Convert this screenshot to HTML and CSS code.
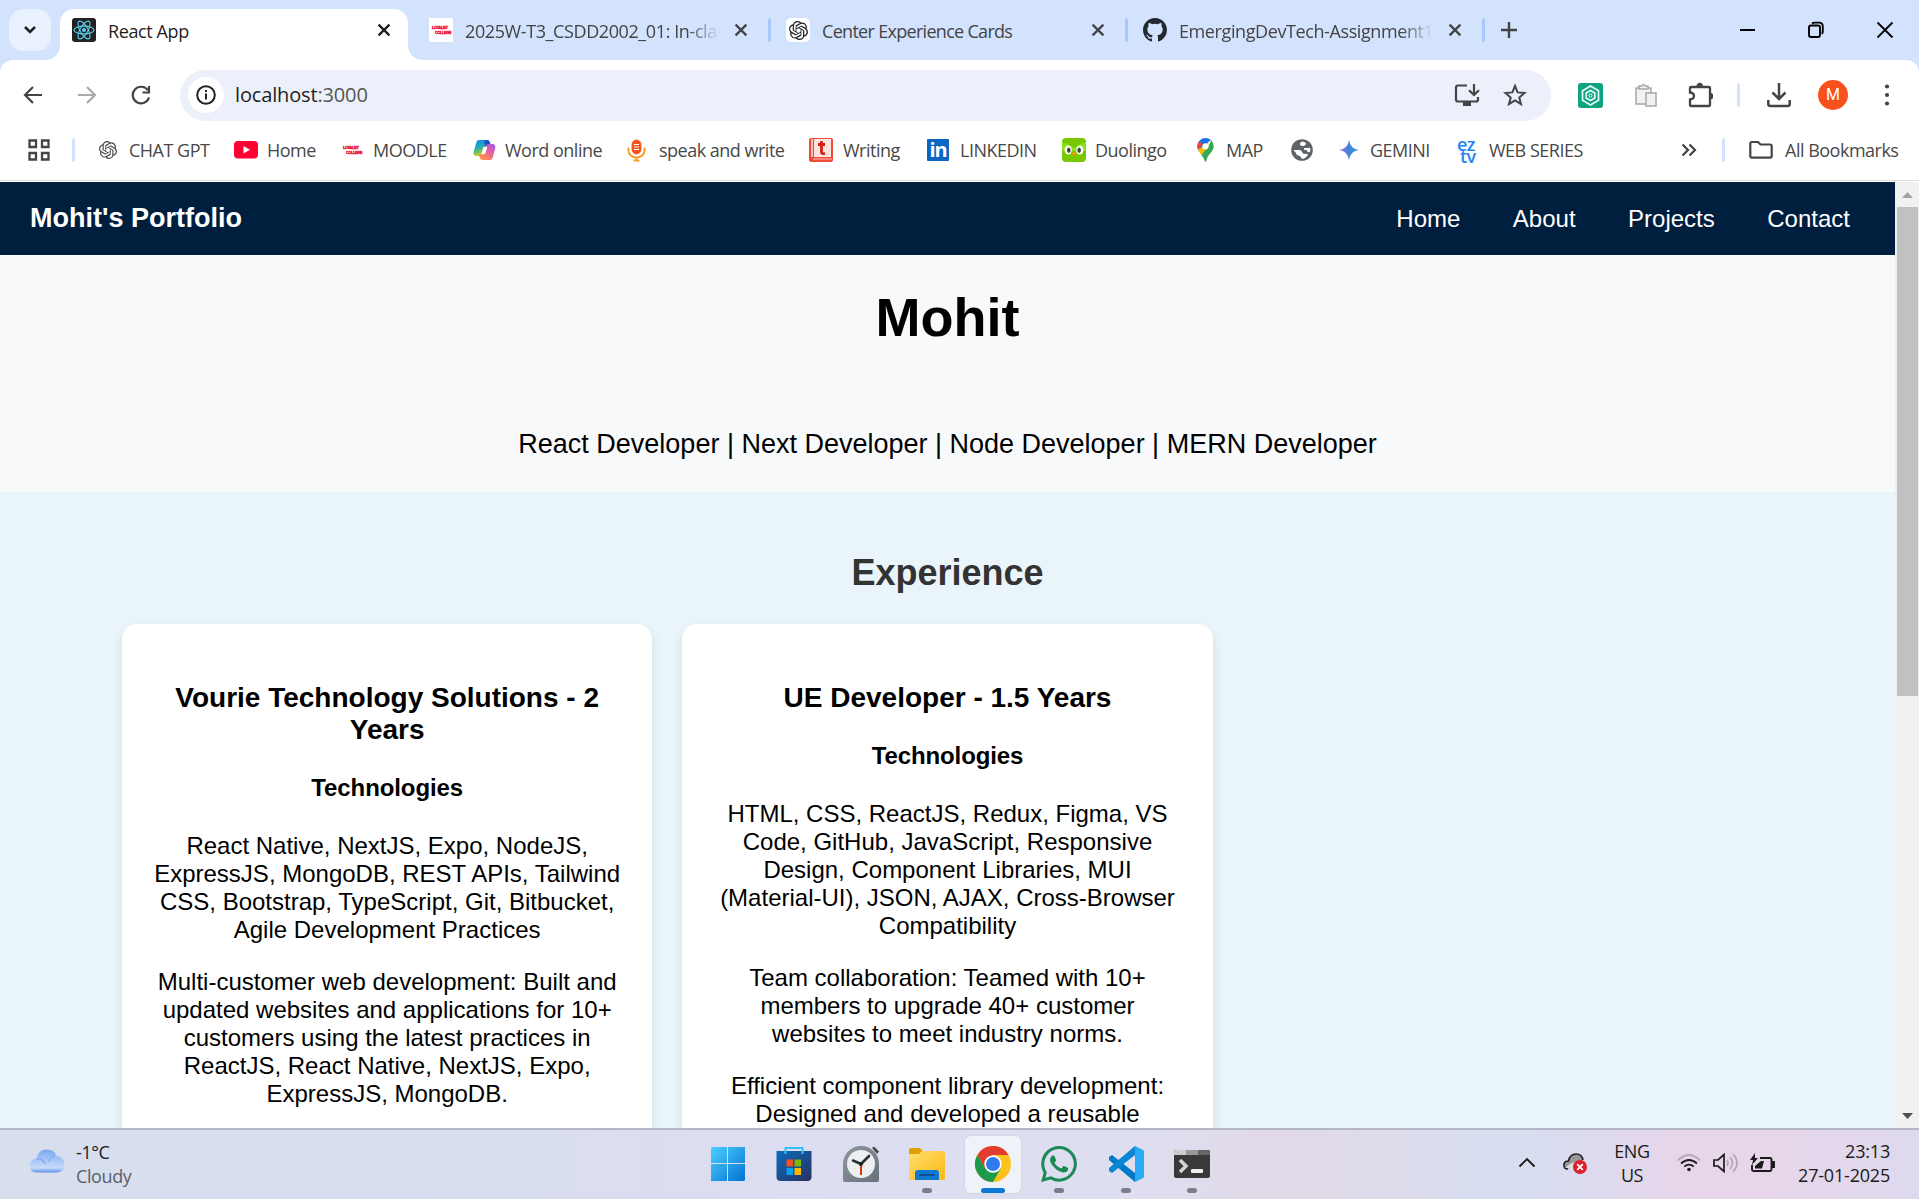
FILE: index.html
```html
<!DOCTYPE html>
<html lang="en">
<head>
<meta charset="utf-8">
<title>React App</title>
<link rel="stylesheet" href="styles.css">
</head>
<body>
<svg class="defs" width="0" height="0">
  <defs>
    <symbol id="close" viewBox="0 0 14 14"><path d="M1.6 1.6 12.4 12.4M12.4 1.6 1.6 12.4" fill="none" stroke="currentColor" stroke-width="2.3"/></symbol>
    <symbol id="openai" viewBox="0 0 24 24"><path fill="currentColor" d="M22.28 9.82a5.98 5.98 0 0 0-.52-4.91 6.05 6.05 0 0 0-6.51-2.9A6.07 6.07 0 0 0 4.98 4.18a5.98 5.98 0 0 0-4 2.9 6.05 6.05 0 0 0 .75 7.1 5.98 5.98 0 0 0 .51 4.9 6.05 6.05 0 0 0 6.51 2.9A5.98 5.98 0 0 0 13.26 24a6.06 6.06 0 0 0 5.77-4.2 5.99 5.99 0 0 0 4-2.9 6.06 6.06 0 0 0-.75-7.08zm-9.02 12.6a4.48 4.48 0 0 1-2.88-1.03l.14-.08 4.78-2.76a.8.8 0 0 0 .39-.68v-6.74l2.02 1.17a.07.07 0 0 1 .04.05v5.58a4.5 4.5 0 0 1-4.49 4.5zM3.6 18.3a4.47 4.47 0 0 1-.53-3.01l.14.08 4.78 2.76a.77.77 0 0 0 .78 0l5.84-3.37v2.33a.08.08 0 0 1-.03.06L9.74 19.95A4.5 4.5 0 0 1 3.6 18.3zM2.34 7.9a4.49 4.49 0 0 1 2.37-1.98V11.6a.77.77 0 0 0 .39.68l5.81 3.35-2.02 1.17a.08.08 0 0 1-.07 0L3.99 14A4.5 4.5 0 0 1 2.34 7.87zm16.6 3.85L13.1 8.36 15.12 7.2a.08.08 0 0 1 .07 0l4.83 2.79a4.49 4.49 0 0 1-.68 8.1v-5.68a.79.79 0 0 0-.4-.66zm2.01-3.02-.14-.09-4.77-2.78a.78.78 0 0 0-.79 0L9.41 9.23V6.9a.07.07 0 0 1 .03-.06l4.83-2.79a4.5 4.5 0 0 1 6.68 4.66zM8.31 12.86l-2.02-1.16a.08.08 0 0 1-.04-.06V6.07a4.5 4.5 0 0 1 7.38-3.45l-.14.08L8.7 5.46a.8.8 0 0 0-.39.68zm1.1-2.36 2.6-1.5 2.6 1.5v3l-2.6 1.5-2.6-1.5z"/></symbol>
    <linearGradient id="copilotA" x1="0" y1="0" x2=".4" y2="1"><stop offset="0" stop-color="#168bdf"/><stop offset=".45" stop-color="#1ba6c6"/><stop offset=".75" stop-color="#7cc255"/><stop offset="1" stop-color="#f5c51b"/></linearGradient>
    <linearGradient id="copilotB" x1="1" y1="0" x2=".4" y2="1"><stop offset="0" stop-color="#9b5cf0"/><stop offset=".5" stop-color="#e5609d"/><stop offset="1" stop-color="#ff8d55"/></linearGradient>
    <linearGradient id="gem" x1="0" x2="1"><stop offset="0" stop-color="#9577d8"/><stop offset=".5" stop-color="#4285d8"/><stop offset="1" stop-color="#2aa3e8"/></linearGradient>
    <linearGradient id="win" gradientUnits="userSpaceOnUse" x1="0" y1="0" x2="36" y2="36"><stop offset="0" stop-color="#4fd2ff"/><stop offset="1" stop-color="#0070d2"/></linearGradient>
    <linearGradient id="bag" x1="0" y1="0" x2="1" y2="1"><stop offset="0" stop-color="#0a6cc0"/><stop offset="1" stop-color="#28305e"/></linearGradient>
    <linearGradient id="clockBody" x1="0" y1="0" x2="1" y2="1"><stop offset="0" stop-color="#8e979f"/><stop offset="1" stop-color="#67727b"/></linearGradient>
    <linearGradient id="folder" x1="0" y1="0" x2="1" y2="1"><stop offset="0" stop-color="#ffdf70"/><stop offset="1" stop-color="#fcb813"/></linearGradient>
    <linearGradient id="cloud" x1="0" y1="0" x2="0" y2="1"><stop offset="0" stop-color="#7ba8f0"/><stop offset=".8" stop-color="#c6dbfb"/><stop offset="1" stop-color="#5f90e8"/></linearGradient>
  </defs>
</svg>

<div class="screen">
  <header class="tabstrip">
    <button class="tab-search"><svg width="14" height="10" viewBox="0 0 14 10"><path d="m2 2 5 5 5-5" fill="none" stroke="#1f1f1f" stroke-width="2.5"/></svg></button>
    <div class="tab tab-active">
      <svg class="favicon" viewBox="0 0 24 24"><rect width="24" height="24" rx="3" fill="#222"/><g fill="none" stroke="#5ccfee" stroke-width="1.1"><ellipse cx="12" cy="12" rx="10" ry="3.9"/><ellipse cx="12" cy="12" rx="10" ry="3.9" transform="rotate(60 12 12)"/><ellipse cx="12" cy="12" rx="10" ry="3.9" transform="rotate(120 12 12)"/></g><circle cx="12" cy="12" r="2" fill="#5ccfee"/></svg>
      <span class="tab-title">React App</span>
      <svg class="tab-close"><use href="#close"/></svg>
    </div>
    <div class="tab">
      <span class="favicon loyalist loyalist-tab"><b>LOYALIST</b><b>COLLEGE</b></span>
      <span class="tab-title fade">2025W-T3_CSDD2002_01: In-class</span>
      <svg class="tab-close"><use href="#close"/></svg><i class="sep"></i>
    </div>
    <div class="tab">
      <span class="favicon gpt-tile"><svg width="19" height="19"><use href="#openai"/></svg></span>
      <span class="tab-title tight">Center Experience Cards</span>
      <svg class="tab-close"><use href="#close"/></svg><i class="sep"></i>
    </div>
    <div class="tab">
      <svg class="favicon" viewBox="0 0 16 16"><path fill="#24292f" d="M8 0C3.58 0 0 3.58 0 8c0 3.54 2.29 6.53 5.47 7.59.4.07.55-.17.55-.38 0-.19-.01-.82-.01-1.49-2.01.37-2.53-.49-2.69-.94-.09-.23-.48-.94-.82-1.13-.28-.15-.68-.52-.01-.53.63-.01 1.08.58 1.23.82.72 1.21 1.87.87 2.33.66.07-.52.28-.87.51-1.07-1.78-.2-3.64-.89-3.64-3.95 0-.87.31-1.59.82-2.15-.08-.2-.36-1.02.08-2.12 0 0 .67-.21 2.2.82a7.6 7.6 0 0 1 4 0c1.53-1.04 2.2-.82 2.2-.82.44 1.1.16 1.92.08 2.12.51.56.82 1.27.82 2.15 0 3.07-1.87 3.75-3.65 3.95.29.25.54.73.54 1.48 0 1.07-.01 1.93-.01 2.2 0 .21.15.46.55.38A8.01 8.01 0 0 0 16 8c0-4.42-3.58-8-8-8z"/></svg>
      <span class="tab-title fade">EmergingDevTech-Assignment1</span>
      <svg class="tab-close"><use href="#close"/></svg><i class="sep"></i>
    </div>
    <button class="new-tab"><svg width="18" height="18"><path d="M9 1v16M1 9h16" stroke="#444" stroke-width="2.4"/></svg></button>
    <div class="window-buttons">
      <svg width="18" height="18"><path d="M2 9h15" stroke="#000" stroke-width="2"/></svg>
      <svg width="18" height="18" fill="none" stroke="#000" stroke-width="1.9"><rect x="2" y="4.500" width="11" height="11.500" rx="2"/><path d="M5 2.500Q6 1.600 8 1.600h4Q15.800 1.600 15.800 5.500v4Q15.800 12 15 13"/></svg>
      <svg width="18" height="18"><path d="m1.500 1.500 15 15m0-15-15 15" stroke="#000" stroke-width="1.800"/></svg>
    </div>
  </header>

  <div class="toolbar">
    <svg width="20" height="20" class="nav-icon" stroke="#444"><path d="M19 10H2m8-8-8 8 8 8"/></svg>
    <svg width="20" height="20" class="nav-icon" stroke="#aaa"><path d="M1 10h17m-8-8 8 8-8 8"/></svg>
    <svg width="20" height="20" class="nav-icon" stroke="#444"><path d="M18 12.500A8.300 8.300 0 1 1 16.800 5.200M18 1v6.500h-6.500"/></svg>
    <div class="omnibox">
      <span class="site-info"><svg width="20" height="20"><circle cx="10" cy="10" r="8.800" fill="none" stroke="#222" stroke-width="2"/><path d="M10 8.500v6M10 5v2" stroke="#222" stroke-width="2"/></svg></span>
      <span class="url">localhost<em>:3000</em></span>
      <svg class="install" width="26" height="24" fill="none" stroke="#444" stroke-width="2.200"><path d="M13 2.500H4Q2 2.500 2 4.500v12Q2 18.500 4 18.500h18q2 0 2-2V14"/><path d="M9 21h8" stroke-width="4"/><path d="M20 1v11m-5-4.800 5 4.800 5-4.800"/></svg>
      <svg width="24" height="24" fill="none" stroke="#444" stroke-width="2"><path d="m12 3 2.600 6.400 7 .6-5.300 4.500 1.700 6.700-6-3.700-6 3.700 1.700-6.700L2.400 10l7-.6z"/></svg>
    </div>
    <svg width="25" height="25"><rect width="25" height="25" rx="3" fill="#10a37f"/><g fill="none" stroke="#e6fff6" stroke-width="1.700"><path d="m12.500 3 8 4.700v9.600l-8 4.700-8-4.700V7.700z"/><path d="m12.500 7.500 4.300 2.400v5.200l-4.300 2.400-4.300-2.400V9.900z"/><path d="m12.500 10.800 1.500.8v1.800l-1.500.8-1.500-.8v-1.800z" stroke-width="1"/></g></svg>
    <svg width="24" height="25" fill="#f2f2f2" stroke="#a8a8a8" stroke-width="1.500"><path d="M2 5h15v16H2z"/><path d="M5 6V3h3q1.500-3 3 0h3v3z"/><path d="M12 10h10v13H12z"/></svg>
    <svg width="26" height="26" fill="none" stroke="#444" stroke-width="2.300"><path d="M5 5h17q1 0 1 1v17q0 1-1 1H4q-1 0-1-1v-5.500q4-.5 4-3.500T3 10.500V6q0-1 1-1z"/><path d="M10.500 4.500Q11 2 12.800 2T15 4.500M23 12q2.500.5 2.500 2.300T23 16.500" fill="#444"/></svg>
    <i class="sep light"></i>
    <svg width="26" height="26" fill="none" stroke="#444" stroke-width="2.500"><path d="M13 1v16m-6.500-6.500L13 17l6.500-6.500M2.300 18v4q0 2 2 2h17.400q2 0 2-2v-4"/></svg>
    <span class="avatar">M</span>
    <svg width="6" height="24" fill="#444"><circle cx="3" cy="3.500" r="2.100"/><circle cx="3" cy="12" r="2.100"/><circle cx="3" cy="20.500" r="2.100"/></svg>
  </div>

  <nav class="bookmarks">
    <svg width="22" height="22" fill="none" stroke="#444" stroke-width="2.300"><path d="M1.500 1.500h6.500V8H1.500zM14 1.500h6.500V8H14zM1.500 14h6.500v6.500H1.500zM14 14h6.500v6.500H14z"/></svg>
    <i class="sep light"></i>
    <svg width="18" height="18"><use href="#openai"/></svg><span>CHAT GPT</span>
    <svg width="24" height="18"><rect width="24" height="17.500" rx="4" fill="#ff0033"/><path d="m9.500 5 6.500 3.700-6.500 3.700z" fill="#fff"/></svg><span>Home</span>
    <span class="loyalist"><b>LOYALIST</b><b>COLLEGE</b></span><span>MOODLE</span>
    <svg width="23" height="22"><path d="M6 1h8q2 0 2.700 2l1 3h-3q-2 0-2.600 2L9.500 15q-.6 2-2.500 2H3.500Q0 17 .8 12.500L3.400 3Q4 1 6 1z" fill="url(#copilotA)"/><path d="M11 1h3q2 0 2.700 2l1 3h-3q-2 0-2.600 1.500z" fill="#1b4fd0"/><path d="M17 21H9.500q-2 0-2.700-2L6 16h2q2 0 2.600-2L13 7q.6-2 2.500-2h4q3.500 0 2.700 4.500L19.600 19q-.6 2-2.600 2z" fill="url(#copilotB)"/><path d="m10.500 8-2.200 7h3.800l2.200-7z" fill="#fff"/></svg><span>Word online</span>
    <svg width="20" height="24" fill="none" stroke="#f06a24"><rect x="5" y="2" width="9" height="14" rx="4.500" fill="#f4511e"/><path d="M1.500 9.500v3a8 7 0 0 0 16 0v-3M9.500 19v4M6.500 22.500h6" stroke="#fb9c2d" stroke-width="2"/><path d="M7 6.500h5M7 9h5M7 11.500h5" stroke="#fff"/></svg><span>speak and write</span>
    <svg width="24" height="24"><path d="M4 0h18q2 0 2 2v20q0 2-2 2H2q-2 0-2-2V2q0-2 2-2z" fill="#f04b35"/><path d="M5 1h17v18H5z" fill="#fbe4df"/><path d="M2 1h2v18H2zM4 20.500h19v1H4z" fill="#fbb"/><path d="M12.500 3v11q0 2.200 3.500 1.500M9 6.500h7" fill="none" stroke="#d81f16" stroke-width="2.800"/></svg><span>Writing</span>
    <span class="linkedin">in</span><span>LINKEDIN</span>
    <svg width="24" height="24"><rect width="24" height="24" rx="4" fill="#78c800"/><path d="M0 4q6 2 12 6 6-4 12-6v9H0z" fill="#89e219"/><ellipse cx="6.200" cy="12" rx="3.600" ry="4.600" fill="#fff"/><ellipse cx="17.800" cy="12" rx="3.600" ry="4.600" fill="#fff"/><ellipse cx="6.800" cy="12.300" rx="1.800" ry="2.700" fill="#444"/><ellipse cx="17.200" cy="12.300" rx="1.800" ry="2.700" fill="#444"/><path d="m9.500 15.500 2.500-1.500 2.500 1.500-2.500 3z" fill="#ff9600"/></svg><span>Duolingo</span>
    <svg width="17" height="24"><path d="M8.500 0A8.200 8.200 0 0 0 .3 8.200q0 2.800 2 5.800L5 11 12 3.500 14 2Q12 0 8.500 0z" fill="#1a73e8"/><path d="M2.300 3 6 6.500l-5 5Q.3 10 .3 8.200.3 5 2.300 3z" fill="#ea4335"/><path d="M1 11.500 11.500 5v6L4.300 17Q2 14 1 11.500z" fill="#fbbc04"/><path d="M14.200 2.200Q16.700 5 16.700 8.200c0 5.300-6 7.800-7.200 14.300-.3 1.500-1.700 1.500-2 0-.5-2-1.700-3.700-3.200-5.500L11.500 8.500z" fill="#34a853"/><circle cx="8.500" cy="8.300" r="3.100" fill="#fff"/></svg><span>MAP</span>
    <svg width="22" height="22"><circle cx="11" cy="11" r="10.800" fill="#5f6368"/><path d="M12 2.500q-3 .5-3 2.500t3 2q3-.5 3-3M2.500 11h6q2 0 2.500 2t3 2q2-.5 3 .5-2 4-6 4.500-1-3-3.500-3.500T5 14zM13 9h4q2-1 2.500 1l-.5 3q-2 1-3-1t-3-1z" fill="#fff"/></svg>
    <svg width="20" height="20"><path d="M10 0q1.200 8.800 10 10-8.800 1.200-10 10Q8.800 11.200 0 10 8.800 8.800 10 0z" fill="url(#gem)"/></svg><span>GEMINI</span>
    <span class="eztv"><b>ez</b><b>tv</b></span><span>WEB SERIES</span>
    <svg width="16" height="14" fill="none" stroke="#444" stroke-width="2.200"><path d="m1.500 1.500 5.500 5.500-5.500 5.500M8.500 1.500 14 7l-5.500 5.500"/></svg>
    <i class="sep light"></i>
    <svg width="24" height="20" fill="none" stroke="#444" stroke-width="2.200"><path d="M3 2h6l2.500 2.500H21q1.700 0 1.700 1.700V16q0 1.700-1.700 1.700H3Q1.300 17.700 1.300 16V3.700Q1.300 2 3 2z"/></svg><span>All Bookmarks</span>
  </nav>

  <div class="viewport">
    <main class="page">
      <div class="site-nav">
        <strong>Mohit's Portfolio</strong>
        <ul><li>Home</li><li>About</li><li>Projects</li><li>Contact</li></ul>
      </div>
      <section class="hero">
        <h1>Mohit</h1>
        <p>React Developer | Next Developer | Node Developer | MERN Developer</p>
      </section>
      <section class="experience">
        <h2>Experience</h2>
        <div class="cards">
          <article class="card">
            <h3>Vourie Technology Solutions - 2 Years</h3>
            <h4>Technologies</h4>
            <p>React Native, NextJS, Expo, NodeJS, ExpressJS, MongoDB, REST APIs, Tailwind CSS, Bootstrap, TypeScript, Git, Bitbucket, Agile Development Practices</p>
            <p>Multi-customer web development: Built and updated websites and applications for 10+ customers using the latest practices in ReactJS, React Native, NextJS, Expo, ExpressJS, MongoDB.</p>
          </article>
          <article class="card">
            <h3>UE Developer - 1.5 Years</h3>
            <h4>Technologies</h4>
            <p>HTML, CSS, ReactJS, Redux, Figma, VS Code, GitHub, JavaScript, Responsive Design, Component Libraries, MUI (Material-UI), JSON, AJAX, Cross-Browser Compatibility</p>
            <p>Team collaboration: Teamed with 10+ members to upgrade 40+ customer websites to meet industry norms.</p>
            <p>Efficient component library development: Designed and developed a reusable</p>
          </article>
        </div>
      </section>
    </main>
    <div class="scrollbar">
      <svg width="24" height="25"><path d="m7 16 5.500-6L18 16z" fill="#a3a3a3"/></svg>
      <div class="thumb"></div>
      <svg class="down" width="24" height="25"><path d="m7 10 5.500 6L18 10z" fill="#505050"/></svg>
    </div>
  </div>

  <footer class="taskbar">
    <div class="weather">
      <svg width="36" height="24"><path d="M8 23.500Q.5 23 .5 16.500T7.500 10Q9 .5 17.500.5T27.500 7Q35.500 8 35.500 15.500T28 23.500z" fill="url(#cloud)"/><path d="M7 10q7-1 9 5m10-8q-5 1-6 6" fill="none" stroke="#6f9dec" stroke-width="1.200" opacity=".7"/></svg>
      <div><span class="temp">-1°C</span><span class="sky">Cloudy</span></div>
    </div>
    <div class="apps">
      <div class="app"><svg width="36" height="36"><g fill="url(#win)"><path d="M2 1h15v16H1V2zM18 1h17v16H18zM1 18h16v17H1zM18 18h17v16l-1 1H18z"/></g></svg></div>
      <div class="app"><svg width="36" height="36"><path d="M.5 5h35v26q0 4-4 4h-27q-4 0-4-4z" fill="url(#bag)"/><path d="M9.500 8V2h17v6" fill="none" stroke="#2fc4f3" stroke-width="2"/><path d="M10.500 13.500H17v7h-6.500z" fill="#f25022"/><path d="M18.500 13.500H25v7h-6.500z" fill="#7fba00"/><path d="M10.500 22H17v7h-6.500z" fill="#00a4ef"/><path d="M18.500 22H25v7h-6.500z" fill="#ffb900"/></svg></div>
      <div class="app"><svg width="36" height="36"><path d="m29 2 2-1.500 5 5L34 8z" fill="#4a4a4a"/><path d="M0 18a18 18 0 0 1 36 0v16q0 2-2 2H2q-2 0-2-2z" fill="url(#clockBody)"/><circle cx="18" cy="18" r="14" fill="#edf0f2"/><path d="m18 18 8-8M18 18l-8-3.500" stroke="#2c3135" stroke-width="2.600" stroke-linecap="round"/><path d="M18 18v11" stroke="#d83b01" stroke-width="2"/><circle cx="18" cy="18" r="2" fill="#222"/></svg></div>
      <div class="app running"><svg width="36" height="36"><path d="M0 4q0-2 2-2h8.500L14 5v5H0z" fill="#dfa000"/><path d="M13 5h21q2 0 2 2v25q0 2-2 2H2q-2 0-2-2V8h10z" fill="url(#folder)"/><path d="M6 34v-7q0-3 3-3h18q3 0 3 3v7z" fill="#0f78d0"/><path d="M11 29h14" stroke="#0a4c96" stroke-width="1.800" stroke-linecap="round"/></svg></div>
      <div class="app running current"><svg width="36" height="36"><circle cx="18" cy="18" r="18" fill="#fcc31e"/><path d="M2.400 9A18 18 0 0 1 33.600 9H18l-7.800 13.500z" fill="#e33b2e"/><path d="M2.400 9A18 18 0 0 0 18 36l7.800-13.500H10.200z" fill="#1f9a4c"/><circle cx="18" cy="18" r="8.700" fill="#fff"/><circle cx="18" cy="18" r="7" fill="#2f7bed"/></svg></div>
      <div class="app running"><svg width="36" height="36" viewBox="0 0 24 24"><path fill="#1c8a57" d="M17.47 14.38c-.3-.15-1.76-.87-2.03-.97-.27-.1-.47-.15-.67.15-.2.3-.77.97-.94 1.16-.17.2-.35.22-.64.08-.3-.15-1.26-.46-2.39-1.48-.88-.79-1.48-1.76-1.65-2.06-.17-.3-.02-.46.13-.6.13-.14.3-.35.45-.52.15-.18.2-.3.3-.5.1-.2.05-.37-.03-.52-.07-.15-.67-1.61-.91-2.2-.24-.58-.49-.5-.67-.51h-.57c-.2 0-.52.07-.79.37-.27.3-1.04 1.02-1.04 2.48s1.07 2.88 1.21 3.07c.15.2 2.1 3.2 5.08 4.49.71.3 1.26.49 1.69.63.71.22 1.36.19 1.87.11.57-.08 1.76-.72 2.01-1.41.25-.7.25-1.29.17-1.41-.07-.13-.27-.2-.57-.35M12.050 21.780a9.870 9.870 0 0 1-5.030-1.380l-.36-.21-3.740.98 1-3.640-.24-.38a9.860 9.860 0 1 1 8.370 4.630m8.410-18.300A11.820 11.820 0 0 0 12.050 0C5.500 0 .16 5.340.16 11.890c0 2.100.55 4.140 1.590 5.950L.06 24l6.300-1.650a11.880 11.880 0 0 0 5.690 1.450c6.550 0 11.890-5.340 11.890-11.890a11.820 11.820 0 0 0-3.480-8.410z"/></svg></div>
      <div class="app running"><svg width="36" height="36"><path d="M1 11 4 9l23 18v9L1 14z" fill="#0079c9"/><path d="M1 25 4 27 27 9V0L1 22z" fill="#0b86d3"/><path d="M27 0v36l8-4q1-.5 1-1.500v-25q0-1-1-1.500z" fill="#2aa9f5"/></svg></div>
      <div class="app running"><svg width="36" height="36"><path d="M0 6q0-2 2-2h32q2 0 2 2v24q0 2-2 2H2q-2 0-2-2z" fill="#393939"/><path d="M0 9V6q0-2 2-2h10v5z" fill="#ccc"/><path d="M12 4h12v5H12z" fill="#999"/><path d="M24 4h10q2 0 2 2v3H24z" fill="#666"/><path d="m6 14 6 6-6 6" fill="none" stroke="#d4d4d4" stroke-width="3.500"/><rect x="17" y="23" width="12" height="4" rx="1" fill="#eee"/></svg></div>
    </div>
    <div class="tray">
      <svg width="18" height="11"><path d="m1.500 9.500 7.500-7.500 7.500 7.500" fill="none" stroke="#1b1b1b" stroke-width="1.900"/></svg>
      <svg width="26" height="22"><path d="M6 17q-4 0-4-4t4.500-4Q8 2 14 2t7 6" fill="#999" stroke="#222" stroke-width="1.700"/><path d="M3 16q7-7 13-6l-5 6z" fill="#ddd"/><circle cx="18" cy="15" r="7" fill="#dc1f2e"/><path d="m15.200 12.200 5.600 5.600m0-5.600-5.600 5.600" stroke="#fff" stroke-width="1.800"/></svg>
      <div class="lang"><span>ENG</span><span>US</span></div>
      <svg width="24" height="18" fill="none" stroke="#1b1b1b" stroke-width="1.700"><path d="M.7 6.500Q12-4.500 23.300 6.500" stroke="#b5a5b5"/><path d="M4 9.500q8-7 16 0M7.300 12.700q4.700-4.200 9.400 0"/><circle cx="12" cy="15.500" r="1.800" fill="#1b1b1b" stroke="none"/></svg>
      <svg width="26" height="20" fill="none" stroke="#1b1b1b" stroke-width="1.700"><path d="M1 7h4l6-5.500v17L5 13H1z"/><path d="M14 7q2 3 0 6M17 4q5 6 0 12M20 1q8 9 0 18" stroke="#b5a5b5"/></svg>
      <svg width="25" height="20" fill="none" stroke="#1b1b1b" stroke-width="1.900"><path d="M10 5h10q1.500 0 1.500 1.500v10Q21.500 18 20 18H3.500Q2 18 2 16.500V12"/><path d="M22 9h2v5h-2z" fill="#1b1b1b"/><path d="M5 15.500V13l6-5h3l-2 7.500z" fill="#1b1b1b" stroke="none"/><path d="M5 0 0 7h3l-1 5 6-7H5z" fill="#1b1b1b" stroke="none"/></svg>
      <div class="clock"><span>23:13</span><span>27-01-2025</span></div>
    </div>
  </footer>
</div>
</body>
</html>
```
FILE: styles.css
```css
* { box-sizing: border-box; }
body { margin: 0; overflow: hidden; background: #fff; }
svg { display: block; flex: none; }
.defs { position: absolute; }
button { border: 0; padding: 0; background: none; }

.screen {
  width: 1919px;
  height: 1199px;
  display: grid;
  grid-template-rows: 60px 70px 52px 946px 71px;
  font-family: "Open Sans", "Noto Sans", sans-serif;
  font-size: 18px;
  color: #444;
}

/* Tab strip */
.tabstrip {
  display: grid;
  grid-template-columns: 42px 348px 357px 357px 357px 78px 1fr;
  padding: 9px 0 0 9px;
  background: #d3e2fd;
}
.tab-search { width: 42px; height: 42px; border-radius: 14px; background: #e9f0fe; display: grid; place-items: center; }
.tab {
  display: flex;
  align-items: center;
  height: 51px;
  margin-left: 9px;
  padding: 0 0 9px 21px;
  position: relative;
}
.tab-active { width: 348px; background: #fff; border-radius: 14px 14px 0 0; padding-left: 12px; color: #1f1f1f; }
.tab-active::before, .tab-active::after {
  content: "";
  position: absolute;
  bottom: 0;
  width: 14px;
  height: 14px;
  background: radial-gradient(circle at 0 0, transparent 13.5px, #fff 14px);
}
.tab-active::before { left: -14px; }
.tab-active::after { right: -14px; background: radial-gradient(circle at 100% 0, transparent 13.5px, #fff 14px); }
.favicon { width: 24px; height: 24px; flex: none; }
.tab-title { flex: none; width: 252px; margin: 1px 0 0 12px; white-space: nowrap; line-height: 28px; letter-spacing: -.4px; }
.tight { letter-spacing: -.7px; }
.fade { overflow: hidden; -webkit-mask-image: linear-gradient(90deg, #000 222px, transparent 254px); mask-image: linear-gradient(90deg, #000 222px, transparent 254px); }
.tab-close { width: 14px; height: 14px; margin-left: 17px; }
.sep { display: block; flex: none; width: 3px; height: 24px; border-radius: 2px; background: #a8c7fa; }
.tab .sep { margin-left: 20px; }
.sep.light { background: #d3e3fd; }
.gpt-tile { background: #fff; border-radius: 5px; display: grid; place-items: center; color: #222; }
.loyalist { display: flex; flex-direction: column; justify-content: center; font: 900 4px/5px "Liberation Sans", sans-serif; color: #f0143c; letter-spacing: -.5px; -webkit-text-stroke: .4px #f0143c; }
.loyalist b:last-child { padding-left: 3px; }
.loyalist-tab { background: #fff; padding-left: 3px; }
.new-tab { height: 42px; display: grid; place-items: center; }
.window-buttons { display: flex; justify-content: flex-end; align-items: center; gap: 51px; height: 42px; padding-right: 25px; }

/* Toolbar */
.toolbar {
  display: grid;
  grid-template-columns: 54px 54px 49px 1398px 56px 53px 50px 29px 52px 66px 1fr;
  align-items: center;
  padding-left: 23px;
  background: #fff;
  position: relative;
}
.toolbar::before, .toolbar::after { content: ""; position: absolute; top: 0; width: 12px; height: 12px; background: radial-gradient(circle at 100% 100%, transparent 11.5px, #d3e2fd 12px); left: 0; }
.toolbar::after { left: auto; right: 0; background: radial-gradient(circle at 0 100%, transparent 11.5px, #d3e2fd 12px); }
.nav-icon { fill: none; stroke-width: 2.2; }
.omnibox { width: 1371px; height: 51px; border-radius: 26px; background: #ecf0fa; display: flex; align-items: center; padding-left: 8px; }
.site-info { width: 36px; height: 36px; border-radius: 50%; background: #fff; display: grid; place-items: center; }
.url { flex: 1; margin-left: 11px; font-size: 20px; line-height: 28px; color: #1f1f1f; letter-spacing: -.15px; }
.url em { font-style: normal; color: #555; }
.install { margin-right: 23px; }
.omnibox > svg:last-child { margin-right: 24px; }
.avatar { width: 30px; height: 30px; border-radius: 50%; background: #f9511d; color: #fff; text-align: center; font: 16px/30px Roboto, sans-serif; }

/* Bookmarks bar: alternating icon and label columns */
.bookmarks {
  display: grid;
  grid-template-columns: 44px 27px 30px 105px 33px 76px 30px 100px 32px 122px 32px 150px 34px 84px 33px 102px 33px 102px 29px 65px 48px 31px 87px 32px 192px 41px 27px 36px 1fr;
  align-items: center;
  padding: 0 0 10px 28px;
  height: 51px;
  border-bottom: 1px solid #dcdee2;
  color: #484848;
  white-space: nowrap;
}
.bookmarks > span { line-height: 26px; letter-spacing: -.5px; }
.bookmarks > .linkedin { width: 22px; height: 22px; background: #0a66c2; color: #fff; border-radius: 1px; font: 700 20px/21px "Open Sans", sans-serif; text-align: center; letter-spacing: -1px; }
.bookmarks > .loyalist { line-height: 5px; letter-spacing: -.5px; }
.bookmarks > .eztv { display: flex; flex-direction: column; color: #2783f5; line-height: 12px; }
.eztv b { font-size: 18px; font-weight: 600; line-height: 12px; height: 12px; }
.eztv b:last-child { padding-left: 3px; }

/* Portfolio page */
.viewport { display: grid; grid-template-columns: 1895px 24px; min-height: 0; }
.page { height: 946px; overflow: hidden; font-family: "Liberation Sans", Arial, sans-serif; font-size: 24px; line-height: 28px; color: #000; background: #eaf5fa; }
.site-nav { height: 73px; padding: 0 45px 2px 30px; background: #001f3f; color: #fff; display: flex; justify-content: space-between; align-items: center; }
.site-nav strong { font-size: 27px; }
.site-nav ul { display: flex; gap: 52.5px; list-style: none; margin: 2px 0 0; padding: 0; }
.hero { height: 237px; padding-top: 31px; background: #f8f9fb; text-align: center; }
.hero h1 { margin: 0; font-size: 54px; line-height: 62px; }
.hero p { margin: 80px 0 0; font-size: 27px; line-height: 32px; }
.experience { padding: 60px 122px 0; text-align: center; }
.experience h2 { margin: 0 0 30px; font-size: 36px; line-height: 42px; color: #333; }
.cards { display: grid; grid-template-columns: repeat(3, 1fr); gap: 30px; }
.card { height: 700px; padding: 58px 30px 0; background: #fff; border-radius: 15px; box-shadow: 0 6px 12px rgba(0, 0, 0, .1); }
.card h3 { margin: 0 0 28px; font-size: 28px; line-height: 32px; }
.card h4 { margin: 0 0 30px; font-size: 24px; line-height: 28px; letter-spacing: -.1px; }
.card p { margin: 0 0 24px; }
.scrollbar { background: #f1f1f1; display: flex; flex-direction: column; }
.thumb { width: 21px; height: 489px; margin-left: 2px; background: #c1c1c1; }
.down { margin-top: auto; }

/* Taskbar */
.taskbar {
  display: grid;
  grid-template-columns: 700px 818px 1fr;
  border-top: 2px solid #b4b5c5;
  background: linear-gradient(90deg, #d7deec 0, #d8def0 14%, #d9deef 28%, #dcddf0 40%, #dedef0 60%, #e1d9e7 66%, #dfdbea 72%, #d7def0 77%, #d9dcf0 81%, #e7d5e9 88%, #e7d6ea 92%, #ded9ed 100%);
  color: #1b1b1b;
}
.weather { display: flex; align-items: flex-start; padding: 18px 0 0 29px; gap: 11px; }
.weather div, .lang, .clock { display: flex; flex-direction: column; line-height: 24px; letter-spacing: -.4px; }
.weather svg { margin-top: 1px; }
.weather div { margin-top: -8px; }
.sky { color: #5b6068; }
.apps { display: flex; gap: 10.3px; padding-top: 6px; }
.app { width: 56px; height: 57px; padding: 10px 0 0 10px; border-radius: 6px; position: relative; }
.running::after { content: ""; position: absolute; left: 23px; bottom: 0; width: 10px; height: 5px; border-radius: 3px; background: #7d7d88; }
.current { background: #f0f2fa; box-shadow: 0 0 1px 1px #d5d6e5; }
.current::after { left: 16px; width: 24px; background: #0a78d6; }
.tray { display: grid; grid-template-columns: 44px 45px 70px 36px 37px 26px 1fr; align-items: center; padding: 0 29px 4px 0; }
.lang { width: 50px; text-align: center; }
.clock { text-align: right; letter-spacing: -.2px; }
```
